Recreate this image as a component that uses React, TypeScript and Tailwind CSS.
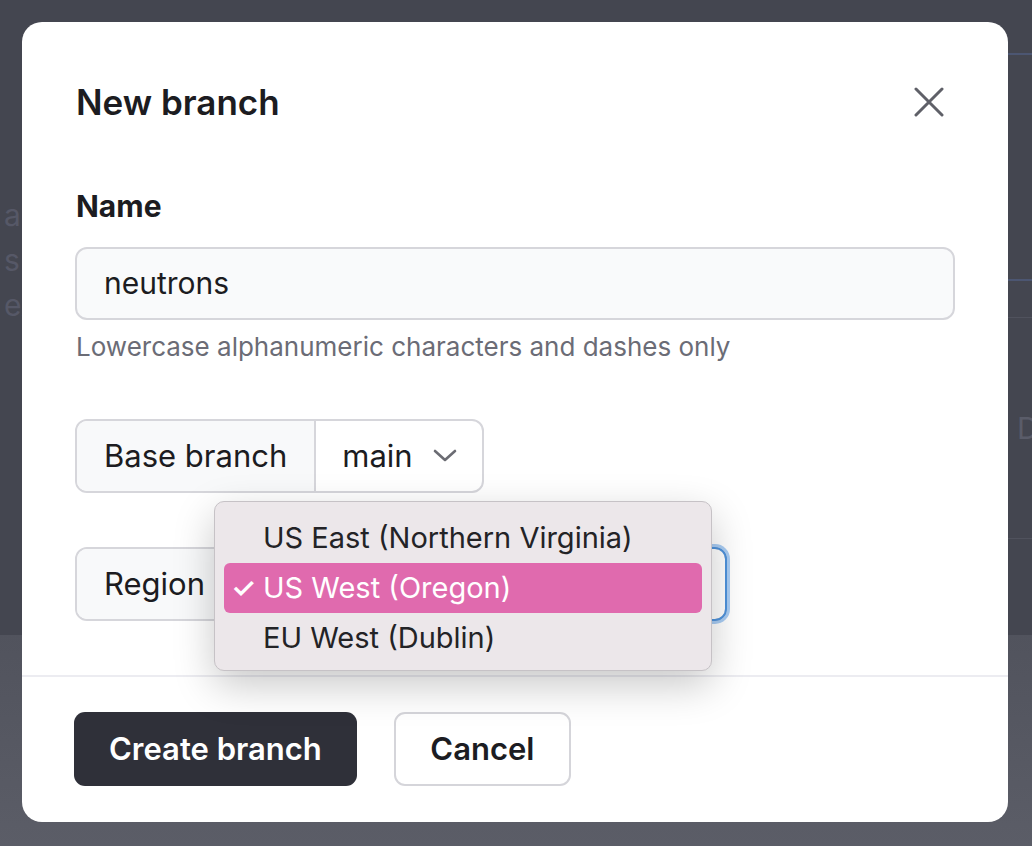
import React from "react";

const regions = [
  { name: "US East (Northern Virginia)", selected: false },
  { name: "US West (Oregon)", selected: true },
  { name: "EU West (Dublin)", selected: false },
];

const Chevron: React.FC = () => (
  <svg width="24" height="14" viewBox="0 0 24 14" fill="none">
    <polyline points="2,2 12,11 22,2" stroke="#6b6c73" strokeWidth="2.6" strokeLinecap="round" strokeLinejoin="round" />
  </svg>
);

const App: React.FC = () => {
  return (
    <div className="relative w-[1032px] h-[846px] overflow-hidden font-['Inter','Liberation_Sans',sans-serif]">
      {/* page behind the overlay */}
      <div className="flex h-full flex-col">
        <div className="flex h-[635px] justify-between bg-[#444650]">
          <div className="pl-[4px] pt-[193px] text-[30px] leading-[45px] text-[#565867]">
            <div>a</div>
            <div>s</div>
            <div>ex</div>
          </div>
          <div className="flex w-[24px] flex-col">
            <div className="h-[55px] border-b-2 border-[#4c5672]" />
            <div className="h-[226px] border-b-2 border-[#4c5672]" />
            <div className="h-[37px] border-b border-[#50525d]" />
            <div className="flex h-[221px] items-center border-b border-[#50525d] pl-[9px] text-[30px] text-[#5a5c69]">
              D
            </div>
          </div>
        </div>
        <div className="flex-1 bg-gradient-to-b from-[#51535d] to-[#5b5d67]" />
      </div>

      {/* modal */}
      <div className="absolute left-[22px] top-[22px] flex h-[800px] w-[986px] flex-col rounded-[20px] bg-white">
        <div className="flex-1 px-[53px] pt-[58px]">
          <div className="flex items-center justify-between">
            <h2 className="pl-px text-[35px] font-semibold leading-[44px] text-[#1c1c21]">New branch</h2>
            <button className="mr-[11px] flex h-[30px] w-[30px] items-center justify-center">
              <svg width="30" height="30" viewBox="0 0 30 30" fill="none">
                <path d="M2 2 L28 28 M28 2 L2 28" stroke="#5f6068" strokeWidth="3" strokeLinecap="round" />
              </svg>
            </button>
          </div>

          <label className="mt-[64px] block pl-px text-[30px] font-bold leading-[36px] text-[#1c1c21]">Name</label>
          <div className="mt-[23px] flex h-[73px] items-center rounded-[12px] border-2 border-[#d6d6db] bg-[#f9fafb] px-[27px] text-[30px] text-[#1c1c21]">
            neutrons
          </div>
          <p className="mt-[11px] pl-px text-[26px] leading-[32px] text-[#6b6c76]">
            Lowercase alphanumeric characters and dashes only
          </p>

          <div className="mt-[56px] flex h-[74px] w-[409px] rounded-[12px] border-2 border-[#d6d6db]">
            <div className="flex items-center rounded-l-[10px] border-r-2 border-[#d6d6db] bg-[#f8f9fa] px-[27px] text-[31px] text-[#1c1c21]">
              Base branch
            </div>
            <div className="flex flex-1 items-center gap-[20px] pl-[26px] text-[31px] text-[#1c1c21]">
              main
              <Chevron />
            </div>
          </div>

          <div className="mt-[54px] flex h-[74px] w-[652px] rounded-[12px] border-2 border-[#d6d6db]">
            <div className="flex items-center rounded-l-[10px] border-r-2 border-[#d6d6db] bg-[#f8f9fa] px-[27px] text-[31px] text-[#1c1c21]">
              Region
            </div>
            <div className="-my-[2px] -mr-[2px] flex flex-1 items-center rounded-r-[12px] border-2 border-[#4f93dc] shadow-[0_0_0_3px_#a9cdf4]" />
          </div>
        </div>

        <div className="flex h-[147px] gap-[37px] border-t-2 border-[#ececf1] px-[52px] pt-[35px]">
          <button className="h-[74px] rounded-[11px] bg-[#2f3039] px-[35px] text-[31px] font-semibold text-white">
            Create branch
          </button>
          <button className="h-[74px] w-[177px] rounded-[11px] border-2 border-[#d5d5da] bg-white text-[31px] font-semibold text-[#1c1c22]">
            Cancel
          </button>
        </div>

        {/* open region menu */}
        <div className="absolute left-[192px] top-[479px] h-[170px] w-[498px] rounded-[10px] border border-[#c6c2c6] bg-[#ece7ea] px-[9px] pt-[11px] shadow-[0_14px_40px_rgba(0,0,0,0.22)]">
          {regions.map((r) => (
            <div
              key={r.name}
              className={
                r.selected
                  ? "flex h-[50px] items-center rounded-[6px] bg-[#e06aae] text-[29px] text-white"
                  : "flex h-[50px] items-center text-[29px] text-[#232326]"
              }
            >
              <span className="w-[39px] pl-[7px] text-[28px] font-semibold">{r.selected ? "✓" : ""}</span>
              {r.name}
            </div>
          ))}
        </div>
      </div>
    </div>
  );
};

export default App;
